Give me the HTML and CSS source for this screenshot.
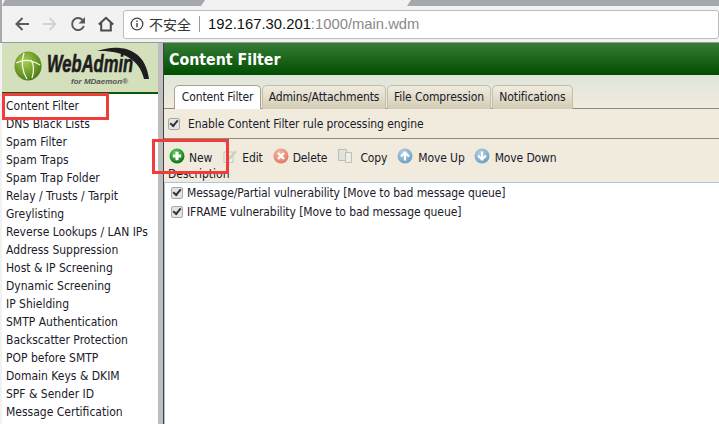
FILE: index.html
```html
<!DOCTYPE html>
<html lang="en">
<head>
  <meta charset="UTF-8" />
  <title>WebAdmin - Content Filter</title>
  <link rel="stylesheet" href="styles.css">
</head>
<body>
  <div class="chrome">
    <div class="tabstrip"><div class="tab"></div><div class="tab tab-right"></div></div>
    <div class="toolbar">
      <svg class="nav" width="16" height="16" viewBox="0 0 16 16"><path d="M15 8H2.500M8.500 2 2.500 8l6 6" fill="none" stroke="#5a5a5a" stroke-width="2"/></svg>
      <svg class="nav" width="16" height="16" viewBox="0 0 16 16"><path d="M1 8h12.500M7.500 2l6 6-6 6" fill="none" stroke="#d2d2d2" stroke-width="2"/></svg>
      <svg class="nav" width="16" height="16" viewBox="0 0 16 16"><path d="M13.800 10A6 6 0 1 1 12.500 4" fill="none" stroke="#5a5a5a" stroke-width="2"/><path d="M15 1v6.500H8.500z" fill="#5a5a5a"/></svg>
      <svg class="nav" width="16" height="16" viewBox="0 0 16 16"><path d="M.8 8.500 8 1.800l7.200 6.700M3.200 7v7.500h9.600V7" fill="none" stroke="#4a4a4a" stroke-width="2"/></svg>
      <div class="omnibox">
        <svg class="info" width="14" height="14" viewBox="0 0 14 14"><circle cx="7" cy="7" r="5.800" fill="none" stroke="#444" stroke-width="1.300"/><path d="M7 6v4.200M7 3.500v1.400" stroke="#444" stroke-width="1.400"/></svg>
        <span class="insecure">不安全</span>
        <span class="sep"></span>
        <span class="url">192.167.30.201<span class="port">:1000/main.wdm</span></span>
      </div>
    </div>
  </div>

  <div class="app">
    <div class="sidebar">
      <div class="logo">
        <svg class="globe" width="28" height="30" viewBox="0 0 28 30"><defs><radialGradient id="globe" cx="40%" cy="35%" r="70%"><stop offset="0" stop-color="#a8d050"/><stop offset="1" stop-color="#477812"/></radialGradient></defs><ellipse cx="14" cy="15" rx="13.500" ry="14.500" fill="url(#globe)"/><path d="M2 12c7-4 16-3 24 2M10 2c-3 9-2 18 3 26M17 9c3 5 3 12 1 18" fill="none" stroke="#f1f7e0" stroke-width="1.300"/></svg>
        <div class="wordmark">
          <div class="brand">WebAdmin</div>
          <div class="for">for MDaemon®</div>
          <svg class="swoosh" width="54" height="34" viewBox="0 0 54 34"><path d="M0 4C20-3 48-1 52 32L47 32C43 13 26 3 0 4z" fill="#1d1d1d"/></svg>
        </div>
      </div>
      <ul class="menu">
        <li>Content Filter</li>
        <li>DNS Black Lists</li>
        <li>Spam Filter</li>
        <li>Spam Traps</li>
        <li>Spam Trap Folder</li>
        <li>Relay / Trusts / Tarpit</li>
        <li>Greylisting</li>
        <li>Reverse Lookups / LAN IPs</li>
        <li>Address Suppression</li>
        <li>Host &amp; IP Screening</li>
        <li>Dynamic Screening</li>
        <li>IP Shielding</li>
        <li>SMTP Authentication</li>
        <li>Backscatter Protection</li>
        <li>POP before SMTP</li>
        <li>Domain Keys &amp; DKIM</li>
        <li>SPF &amp; Sender ID</li>
        <li>Message Certification</li>
      </ul>
    </div>

    <div class="content">
      <div class="title">Content Filter</div>
      <div class="tabs">
        <div class="tabitem active">Content Filter</div>
        <div class="tabitem">Admins/Attachments</div>
        <div class="tabitem">File Compression</div>
        <div class="tabitem">Notifications</div>
      </div>
      <div class="enable"><span class="check"></span>Enable Content Filter rule processing engine</div>
      <div class="actions">
        <div class="action">
          <svg width="16" height="16" viewBox="0 0 16 16"><defs><radialGradient id="green" cx="40%" cy="30%" r="75%"><stop offset="0" stop-color="#5fd05f"/><stop offset="1" stop-color="#0b6d0b"/></radialGradient></defs><circle cx="8" cy="8" r="7.500" fill="url(#green)"/><path d="M8 3.800v8.400M3.800 8h8.400" stroke="#fff" stroke-width="3"/></svg>
          <span>New</span>
        </div>
        <div class="action">
          <svg width="16" height="16" viewBox="0 0 16 16"><path d="M2 4h9v10.500H2z" fill="#eeeeea" stroke="#c8c8c0"/><path d="M6 10 13 2.500l2 1.500-7 7.500-2.500.5z" fill="#c7d6a4"/></svg>
          <span>Edit</span>
        </div>
        <div class="action">
          <svg width="16" height="16" viewBox="0 0 16 16"><defs><radialGradient id="red" cx="40%" cy="30%" r="75%"><stop offset="0" stop-color="#f4b8a4"/><stop offset="1" stop-color="#dc7a5e"/></radialGradient></defs><circle cx="8" cy="8" r="7.500" fill="url(#red)"/><path d="M5 5l6 6M11 5l-6 6" stroke="#fff" stroke-width="2.400"/></svg>
          <span>Delete</span>
        </div>
        <div class="action copy">
          <svg width="16" height="16" viewBox="0 0 16 16"><path d="M1.500 1.500h8v11h-8z" fill="#e2e2dc" stroke="#bdbdb5"/><path d="M8.500 4.500h6v10h-6z" fill="#efefea" stroke="#bdbdb5"/></svg>
          <span>Copy</span>
        </div>
        <div class="action move">
          <svg width="16" height="16" viewBox="0 0 16 16"><defs><radialGradient id="blue" cx="40%" cy="30%" r="75%"><stop offset="0" stop-color="#b4d2e6"/><stop offset="1" stop-color="#6c9cc0"/></radialGradient></defs><circle cx="8" cy="8" r="7.500" fill="url(#blue)"/><path d="M8 12.500V4.500M4 8.500l4-4 4 4" fill="none" stroke="#fff" stroke-width="2.200"/></svg>
          <span>Move Up</span>
        </div>
        <div class="action move">
          <svg width="16" height="16" viewBox="0 0 16 16"><circle cx="8" cy="8" r="7.500" fill="url(#blue)"/><path d="M8 3.500V11.500M4 7.500l4 4 4-4" fill="none" stroke="#fff" stroke-width="2.200"/></svg>
          <span>Move Down</span>
        </div>
      </div>
      <div class="columns">Description</div>
      <div class="rows">
        <div class="row"><span class="check"></span>Message/Partial vulnerability [Move to bad message queue]</div>
        <div class="row"><span class="check"></span>IFRAME vulnerability [Move to bad message queue]</div>
      </div>
    </div>
  </div>

  <div class="mark mark-menu"></div>
  <div class="mark mark-new"></div>
</body>
</html>
```

FILE: styles.css
```css
html, body {
  margin: 0;
  height: 424px;
  overflow: hidden;
}

body {
  font-family: "DejaVu Sans Condensed", "DejaVu Sans", sans-serif;
  font-size: 12px;
  color: #1a1a2a;
  background-color: #fff;
}

.chrome {
  height: 42px;
  background-color: #f2f2f2;
  border-left: 2px solid #a9a9a9;
  box-sizing: border-box;
}

.tabstrip {
  display: flex;
  justify-content: space-between;
  height: 6px;
}

.tab {
  width: 203px;
  background-color: #a4a8ae;
  clip-path: polygon(3px 0, 100% 0, calc(100% - 4px) 100%, 0 100%);
}

.tab-right {
  width: 312px;
  clip-path: polygon(4px 0, 100% 0, 100% 100%, 0 100%);
}

.toolbar {
  display: flex;
  align-items: center;
  height: 36px;
  padding-left: 12px;
  gap: 12px;
}

.nav {
  flex: none;
}

.omnibox {
  display: flex;
  align-items: center;
  width: 600px;
  height: 27px;
  margin-left: -3px;
  padding-left: 6px;
  background-color: #fff;
  border: 1px solid #bdbdbd;
  border-radius: 3px;
  font-family: "Liberation Sans", sans-serif;
}

.insecure {
  margin-left: 5px;
  font-family: "Noto Sans CJK SC", sans-serif;
  font-size: 14px;
  color: #333;
}

.sep {
  width: 1px;
  height: 16px;
  margin: 0 8px;
  background-color: #999;
}

.url {
  font-size: 14.800px;
  color: #111;
}

.port {
  color: #8a8a8a;
}

.app {
  display: flex;
  height: 382px;
  border-top: 1px solid #9a9a9a;
  box-sizing: border-box;
  padding-left: 2px;
  background-color: #f2f2f2;
}

.sidebar {
  width: 156px;
  flex: none;
  background-color: #fff;
  border-right: 5px solid #bdbdbd;
}

.logo {
  display: flex;
  gap: 5px;
  align-items: flex-start;
  height: 51px;
  box-sizing: border-box;
  padding: 8px 0 0 12px;
  background-color: #d4dfbc;
  border-bottom: 2px solid #0b5a0b;
}

.wordmark {
  position: relative;
  width: 100px;
}

.brand {
  font-family: "Liberation Sans", sans-serif;
  font-size: 23px;
  font-weight: bold;
  font-style: italic;
  -webkit-text-stroke: 0.6px #1d1d1d;
  color: #1d1d1d;
  line-height: 26px;
  white-space: nowrap;
  transform: scaleX(0.72);
  transform-origin: left;
}

.for {
  font-family: "Liberation Sans", sans-serif;
  font-size: 8px;
  font-weight: bold;
  font-style: italic;
  line-height: 7px;
  margin: 1px 0 0 24px;
  color: #555;
  white-space: nowrap;
}

.swoosh {
  position: absolute;
  left: 50px;
  top: -4px;
}

.menu {
  list-style: none;
  margin: 0;
  padding: 3px 0 0 4px;
}

.menu li {
  height: 18px;
  line-height: 18px;
  white-space: nowrap;
}

.content {
  display: flex;
  flex-direction: column;
  flex: 1;
  background-color: #fff;
  border-left: 1px solid #444;
}

.title {
  height: 32px;
  line-height: 33px;
  padding-left: 5px;
  font-family: "DejaVu Sans Condensed", sans-serif;
  font-size: 15.800px;
  font-weight: bold;
  color: #fff;
  background: linear-gradient(#357c35, #004d00);
}

.tabs {
  display: grid;
  grid-template-columns: 87px 124px 104px 81px;
  gap: 1px;
  height: 34px;
  box-sizing: border-box;
  padding: 10px 0 0 10px;
  background: linear-gradient(#dfe5da, #f0ebdd);
  border-bottom: 1px solid #8c8a7a;
  letter-spacing: -0.1px;
}

.tabitem {
  height: 24px;
  line-height: 23px;
  box-sizing: border-box;
  text-align: center;
  white-space: nowrap;
  background: linear-gradient(#f0ecdf, #d3ccb5);
  border: 1px solid #c4bea8;
  border-bottom: none;
  border-radius: 5px 5px 0 0;
}

.tabitem.active {
  height: 25px;
  background: #fff;
  border-color: #a8a390;
}

.enable {
  display: flex;
  align-items: center;
  height: 29px;
  padding-left: 4px;
  background-color: #f0ebdd;
  border-bottom: 1px solid #8c8a7a;
  letter-spacing: -0.09px;
}

.enable .check {
  margin-right: 8px;
}

.check {
  display: inline-block;
  position: relative;
  flex: none;
  width: 10px;
  height: 10px;
  background-color: #e4e4e4;
  border: 1px solid #a9a9a9;
  border-radius: 2px;
}

.check::after {
  content: "";
  position: absolute;
  left: 1px;
  top: 1px;
  width: 6px;
  height: 3px;
  border-left: 2px solid #333;
  border-bottom: 2px solid #333;
  transform: rotate(-50deg);
}

.actions {
  display: flex;
  align-items: flex-end;
  height: 29px;
  box-sizing: border-box;
  padding: 0 0 3px 5px;
  background-color: #f0ebdd;
  letter-spacing: -0.12px;
}

.action {
  display: flex;
  align-items: flex-end;
  gap: 4px;
  margin-right: 10px;
}

.action svg {
  margin-bottom: 1px;
}

.action.copy {
  gap: 7px;
}

.action.move {
  gap: 5px;
  margin-right: 9px;
}

.columns {
  flex: none;
  height: 15px;
  line-height: 13px;
  padding-left: 4px;
  background-color: #f0ebdd;
  border-bottom: 1px solid #a8c4e4;
  box-sizing: border-box;
}

.rows {
  flex: 1;
  padding-left: 6px;
  border-left: 1px solid #a8c4e4;
  letter-spacing: -0.09px;
}

.row {
  display: flex;
  align-items: center;
  gap: 4px;
  height: 19px;
}

.mark {
  position: absolute;
  box-sizing: border-box;
  border: 3px solid #f23b3b;
}

.mark-menu {
  left: 2px;
  top: 93px;
  width: 107px;
  height: 27px;
}

.mark-new {
  left: 152px;
  top: 139px;
  width: 77px;
  height: 35px;
}
```
